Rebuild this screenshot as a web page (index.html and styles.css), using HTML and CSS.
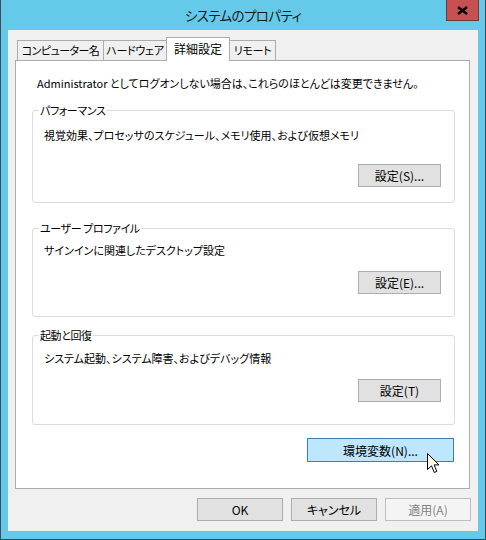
FILE: index.html
```html
<!DOCTYPE html>
<html lang="ja">

<head>
    <meta charset="UTF-8" />
    <title>システムのプロパティ</title>
    <link rel="stylesheet" href="styles.css">
</head>

<body>

    <div class="window">
        <!-- タイトルバー -->
        <div class="titlebar">
            <span class="title">システムのプロパティ</span>
            <div class="close">
                <svg width="11" height="9" viewBox="0 0 11 9">
                    <path d="M1 1 L10 8 M10 1 L1 8" stroke="#000" stroke-width="2.4" />
                </svg>
            </div>
        </div>

        <div class="client">
            <!-- タブ -->
            <ul class="tabs">
                <li class="tab tab-name">コンピューター名</li>
                <li class="tab tab-hw">ハードウェア</li>
                <li class="tab tab-adv active">詳細設定</li>
                <li class="tab tab-remote">リモート</li>
            </ul>

            <div class="panel">
                <p class="notice">Administrator としてログオンしない場合は、これらのほとんどは変更できません。</p>

                <fieldset class="group group-perf">
                    <legend>パフォーマンス</legend>
                    <p>視覚効果、プロセッサのスケジュール、メモリ使用、および仮想メモリ</p>
                    <div class="row"><button class="btn">設定(S)...</button></div>
                </fieldset>

                <fieldset class="group group-profile">
                    <legend>ユーザー プロファイル</legend>
                    <p>サインインに関連したデスクトップ設定</p>
                    <div class="row"><button class="btn">設定(E)...</button></div>
                </fieldset>

                <fieldset class="group group-startup">
                    <legend>起動と回復</legend>
                    <p>システム起動、システム障害、およびデバッグ情報</p>
                    <div class="row"><button class="btn">設定(T)</button></div>
                </fieldset>

                <div class="row env-row">
                    <button class="btn btn-env">環境変数(N)...</button>
                </div>
            </div>

            <!-- 下部ボタン -->
            <div class="footer">
                <button class="btn">OK</button>
                <button class="btn">キャンセル</button>
                <button class="btn" disabled>適用(A)</button>
            </div>
        </div>

        <svg class="cursor" width="13" height="21" viewBox="0 0 13 21">
            <path d="M0.5 0.5 L0.5 16.5 L4.5 12.8 L7.3 19.5 L9.8 18.4 L7.1 11.9 L12 11.9 Z"
                fill="#fff" stroke="#000" stroke-width="1" stroke-linejoin="miter" />
        </svg>
    </div>

</body>

</html>
```

FILE: styles.css
```css
* {
    box-sizing: border-box;
}

body {
    margin: 0;
    font-family: "Noto Sans CJK JP", "Noto Sans", sans-serif;
    font-size: 11px;
    font-feature-settings: "palt";
    color: #000;
}

/* --- WINDOW --- */
.window {
    position: relative;
    width: 486px;
    height: 540px;
    background: #65c9e9;
    border: 1px solid #3f4a50;
    border-top: none;
}

.titlebar {
    position: relative;
    display: flex;
    justify-content: center;
    align-items: center;
    height: 30px;
}

.title {
    font-size: 13.5px;
    letter-spacing: -0.6px;
    color: #1a1a1a;
}

.close {
    position: absolute;
    top: 0;
    right: 6px;
    width: 33px;
    height: 21px;
    display: flex;
    justify-content: center;
    align-items: center;
    background: #c75050;
    border: 1px solid #6b3a3a;
    border-top: none;
}

.client {
    margin: 0 7px;
    height: 501px;
    background: #f0f0f0;
    padding: 8px 0 0 7px;
}

/* --- TABS --- */
.tabs {
    list-style: none;
    margin: 0;
    padding: 0 0 0 2px;
    display: flex;
    align-items: flex-end;
    height: 22px;
}

.tab {
    height: 20px;
    line-height: 18px;
    text-align: center;
    letter-spacing: -0.3px;
    background: #f0f0f0;
    border: 1px solid #acacac;
    border-bottom: none;
    margin-right: -1px;
}

.tab-name {
    width: 87px;
    letter-spacing: -0.6px;
}

.tab-hw {
    width: 64px;
}

.tab-adv {
    width: 64px;
}

.tab-remote {
    width: 47px;
}

.tab.active {
    position: relative;
    z-index: 1;
    height: 24px;
    margin-bottom: -1px;
    line-height: 22px;
    background: #fff;
    font-size: 12px;
    letter-spacing: 0;
}

/* --- PANEL --- */
.panel {
    width: 455px;
    height: 429px;
    background: #fff;
    border: 1px solid #acacac;
    padding: 14px 14px 0 16px;
}

.notice {
    margin: 0 0 11px 5px;
    line-height: 16px;
}

.group {
    margin: 0;
    border: 1px solid #dcdcdc;
    border-radius: 3px;
    padding: 0 13px 0 11px;
}

.group legend {
    margin-left: -5px;
    padding: 0 1px;
    line-height: 16px;
    letter-spacing: -0.4px;
}

.group p {
    margin: 0;
    line-height: 16px;
}

.row {
    display: flex;
    justify-content: flex-end;
}

.group-perf p {
    margin-top: 9px;
}

.group-perf .row {
    margin-top: 21px;
    padding-bottom: 15px;
}

.group-profile {
    margin-top: 17px;
}

.group-profile p {
    margin-top: 6px;
}

.group-profile .row {
    margin-top: 13px;
    padding-bottom: 22px;
}

.group-startup {
    margin-top: 10px;
}

.group-startup p {
    margin-top: 7px;
}

.group-startup .row {
    margin-top: 13px;
    padding-bottom: 22px;
}

.env-row {
    margin-top: 13px;
    padding-right: 1px;
}

/* --- BUTTONS --- */
.btn {
    width: 83px;
    height: 23px;
    font-family: inherit;
    font-size: 12px;
    font-feature-settings: "palt";
    color: #000;
    background: #e1e1e1;
    border: 1px solid #adadad;
    padding: 0;
}

.btn-env {
    width: 147px;
    height: 24px;
    background: #bee6fd;
    border-color: #3c7fb1;
}

.btn:disabled {
    color: #838383;
    background: #f4f4f4;
    border-color: #bfbfbf;
}

.footer {
    display: flex;
    justify-content: flex-end;
    gap: 8px;
    margin-top: 9px;
    padding-right: 7px;
}

.footer .btn {
    width: 86px;
}

.cursor {
    position: absolute;
    left: 426px;
    top: 453px;
}
```
